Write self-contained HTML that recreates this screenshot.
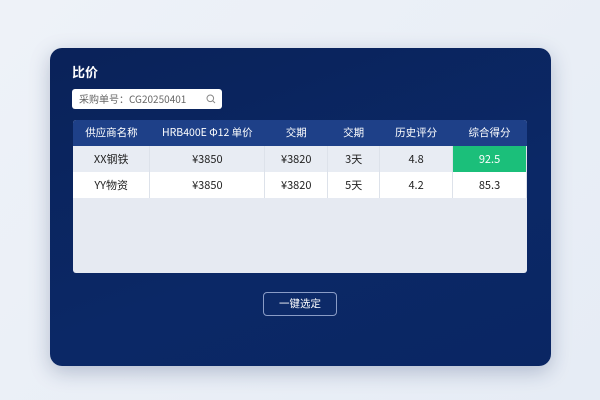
<!DOCTYPE html>
<html><head><meta charset="utf-8"><style>
*{margin:0;padding:0;box-sizing:border-box}
body{width:600px;height:400px;background:linear-gradient(135deg,#eef2f8,#e6ecf5);font-family:"Noto Sans CJK SC","Liberation Sans",sans-serif;position:relative;overflow:hidden}
.card{position:absolute;left:50px;top:48px;width:501px;height:318px;border-radius:12px;background:linear-gradient(160deg,#0a2259,#0b2866 60%,#0a2663);box-shadow:0 6px 20px rgba(20,40,90,.25)}
h1{position:absolute;left:22px;top:15px;font-size:13px;line-height:18px;color:#fff;font-weight:bold}
.search{position:absolute;left:22px;top:41px;width:150px;height:20px;background:#fff;border-radius:3px;font-size:10px;line-height:20px;color:#666;padding-left:7px}
.search svg{position:absolute;right:6px;top:5px}
.tbl{position:absolute;left:23px;top:72px;width:454px;height:153px;background:#e6eaf2;border-radius:3px;overflow:hidden}
table{border-collapse:collapse;width:454px;font-size:11px;text-align:center}
th{background:#1e4088;color:#fff;font-weight:normal;height:26px;line-height:26px;padding:0;font-size:10.5px}
td{height:26px;line-height:26px;padding:0;color:#222;border-right:1px solid #dde2ea}
tr.r1 td{background:#e8ecf3}
tr.r2 td{background:#fff}
td.g{background:#1bbf7a!important;color:#fff}
.btn{position:absolute;left:213px;top:244px;width:74px;height:24px;border:1px solid #8a9cc6;border-radius:4px;color:#fff;font-size:10.5px;text-align:center;line-height:22px;background:#0d2a68}
</style></head><body>
<div class="card">
<h1>比价</h1>
<div class="search">采购单号：CG20250401<svg width="10" height="10" viewBox="0 0 10 10"><circle cx="4.3" cy="4.3" r="3.3" fill="none" stroke="#888" stroke-width="1"/><path d="M6.8 6.8L9 9" stroke="#888" stroke-width="1"/></svg></div>
<div class="tbl"><table>
<colgroup><col style="width:77px"><col style="width:115px"><col style="width:63px"><col style="width:52px"><col style="width:73px"><col style="width:74px"></colgroup>
<tr><th>供应商名称</th><th>HRB400E Φ12 单价</th><th>交期</th><th>交期</th><th>历史评分</th><th>综合得分</th></tr>
<tr class="r1"><td>XX钢铁</td><td>¥3850</td><td>¥3820</td><td>3天</td><td>4.8</td><td class="g">92.5</td></tr>
<tr class="r2"><td>YY物资</td><td>¥3850</td><td>¥3820</td><td>5天</td><td>4.2</td><td>85.3</td></tr>
</table></div>
<div class="btn">一键选定</div>
</div>
</body></html>
